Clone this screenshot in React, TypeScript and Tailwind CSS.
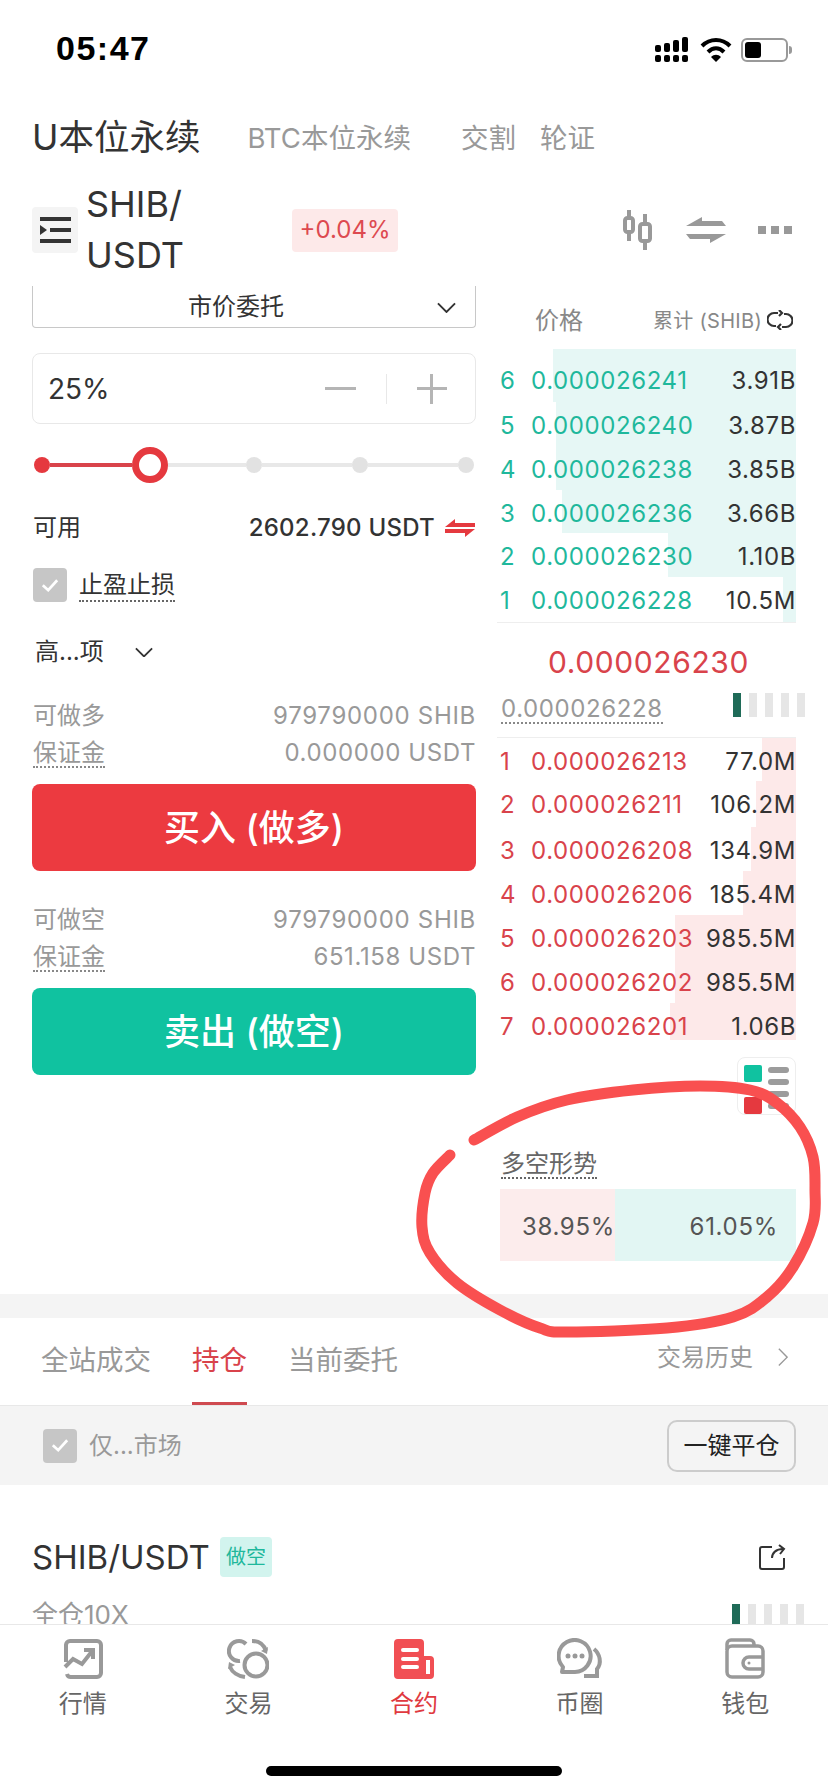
import type { ReactNode } from "react"

const bids = [
  { n: 6, price: "0.000026241", vol: "3.91B", bar: 243, h: "h-[53px]", first: true },
  { n: 5, price: "0.000026240", vol: "3.87B", bar: 240, h: "h-[44px]" },
  { n: 4, price: "0.000026238", vol: "3.85B", bar: 240, h: "h-[44px]" },
  { n: 3, price: "0.000026236", vol: "3.66B", bar: 234, h: "h-[43px]" },
  { n: 2, price: "0.000026230", vol: "1.10B", bar: 128, h: "h-[44px]" },
  { n: 1, price: "0.000026228", vol: "10.5M", bar: 13, h: "h-[45px]" },
]

const asks = [
  { n: 1, price: "0.000026213", vol: "77.0M", bar: 34, h: "h-[43px]" },
  { n: 2, price: "0.000026211", vol: "106.2M", bar: 40, h: "h-[46px]" },
  { n: 3, price: "0.000026208", vol: "134.9M", bar: 45, h: "h-[44px]" },
  { n: 4, price: "0.000026206", vol: "185.4M", bar: 53, h: "h-[44px]" },
  { n: 5, price: "0.000026203", vol: "985.5M", bar: 121, h: "h-[44px]" },
  { n: 6, price: "0.000026202", vol: "985.5M", bar: 121, h: "h-[44px]" },
  { n: 7, price: "0.000026201", vol: "1.06B", bar: 126, h: "h-[37px]" },
]

// hand drawn circle, roughly traced off the reference
const circlePoints = [
  [474, 1140], [517, 1117], [567, 1100], [633, 1090], [700, 1086], [750, 1090], [777, 1103], [800, 1127],
  [813, 1157], [815, 1190], [813, 1223], [793, 1267], [767, 1297], [733, 1317], [667, 1328], [567, 1332],
  [540, 1328], [500, 1310], [457, 1283], [430, 1253], [422, 1227], [425, 1193], [433, 1173], [450, 1155],
]

function smoothPath(pts: number[][]) {
  let d = `M${pts[0][0]} ${pts[0][1]}`
  for (let i = 0; i < pts.length - 1; i++) {
    const p0 = pts[Math.max(i - 1, 0)]
    const p1 = pts[i]
    const p2 = pts[i + 1]
    const p3 = pts[Math.min(i + 2, pts.length - 1)]
    d += ` C${p1[0] + (p2[0] - p0[0]) / 6} ${p1[1] + (p2[1] - p0[1]) / 6} ${p2[0] - (p3[0] - p1[0]) / 6} ${p2[1] - (p3[1] - p1[1]) / 6} ${p2[0]} ${p2[1]}`
  }
  return d
}

function Chevron({ className }: { className: string }) {
  return (
    <svg viewBox="0 0 20 12" fill="none" stroke="#333" strokeWidth="2" className={className}>
      <path d="M1 1.5 10 10.5 19 1.5" />
    </svg>
  )
}

function Check() {
  return (
    <span className="flex size-[34px] shrink-0 items-center justify-center rounded-[4px] bg-[#c6c6c6]">
      <svg viewBox="0 0 20 16" fill="none" stroke="#fff" strokeWidth="3" className="w-[18px]">
        <path d="M2 8 8 13.5 18 2.5" />
      </svg>
    </span>
  )
}

function Dotted({ children, className }: { children: ReactNode; className: string }) {
  return <span className={`border-b-2 border-dotted ${className}`}>{children}</span>
}

function LevelBars() {
  return (
    <div className="flex h-full gap-2">
      <span className="h-full w-2 bg-[#1f6b58]" />
      <span className="h-full w-2 bg-[#e6e6e6]" />
      <span className="h-full w-2 bg-[#e6e6e6]" />
      <span className="h-full w-2 bg-[#e6e6e6]" />
      <span className="h-full w-2 bg-[#e6e6e6]" />
    </div>
  )
}

function Stats({ top, label, amount, margin }: { top: string; label: string; amount: string; margin: string }) {
  return (
    <div className={`${top} text-[24px] leading-[36px] text-[#999]`}>
      <div className="flex justify-between pl-px">
        <span>{label}</span>
        <span className="tracking-[0.7px]">{amount}</span>
      </div>
      <div className="mt-px flex justify-between pl-px">
        <Dotted className="h-[33px] border-[#888] leading-[36px]">保证金</Dotted>
        <span className="tracking-[0.6px]">{margin}</span>
      </div>
    </div>
  )
}

function BookRow({
  n, price, vol, bar, h, first, tone,
}: { n: number; price: string; vol: string; bar: number; h: string; first?: boolean; tone: "bid" | "ask" }) {
  return (
    <div className={`relative flex items-start ${h}`}>
      <span
        className={`absolute inset-y-0 right-0 ${tone === "bid" ? "bg-[#e6f7f5]" : "bg-[#fde9e9]"}`}
        style={{ width: bar }}
      />
      <div
        className={`relative flex w-full text-[24px] leading-[44px] tracking-[0.6px] ${first ? "mt-[10px]" : "mt-[2px]"}`}
      >
        <span className={`w-[34px] pl-[3px] ${tone === "bid" ? "text-[#1fb89c]" : "text-[#d9434b]"}`}>{n}</span>
        <span className={tone === "bid" ? "text-[#1fb89c]" : "text-[#d9434b]"}>{price}</span>
        <span className="ml-auto text-[#333]">{vol}</span>
      </div>
    </div>
  )
}

function NavIcon({ name }: { name: string }) {
  if (name === "market") {
    return (
      <svg viewBox="0 0 40 42" fill="none" stroke="#999" strokeWidth="4" className="h-[42px] w-[40px]">
        <path d="M3 24V7a4 4 0 0 1 4-4h27a4 4 0 0 1 4 4v28a4 4 0 0 1-4 4H8a4 4 0 0 1-4-3" />
        <path d="M2 29l8-8 9 5 11-14" />
        <path d="M21 12h9v9" />
      </svg>
    )
  }
  if (name === "trade") {
    return (
      <svg viewBox="0 0 42 42" fill="none" stroke="#999" strokeWidth="4" className="h-[42px] w-[42px]">
        <circle cx="29" cy="27" r="11.5" />
        <path d="M19 6A10 10 0 1 0 13 23" />
        <path d="M25 3C32 3 37 7 39 13" />
        <path d="M3 29C5 34 11 38 18 39" />
        <path d="M34 13l6 3 1-7z" fill="#999" stroke="none" />
        <path d="M2 24l6 3-7 4z" fill="#999" stroke="none" />
      </svg>
    )
  }
  if (name === "contract") {
    return (
      <svg viewBox="0 0 40 40" className="h-[40px] w-[40px]">
        <path d="M4 0h22a4 4 0 0 1 4 4v13h6a4 4 0 0 1 4 4v15a4 4 0 0 1-4 4H4a4 4 0 0 1-4-4V4a4 4 0 0 1 4-4z" fill="#f14f54" />
        <path d="M9 11h14M9 20h14M9 28h14" stroke="#fff" strokeWidth="4" strokeLinecap="round" />
        <path d="M34 21v14" stroke="#fff" strokeWidth="4" />
      </svg>
    )
  }
  if (name === "circle") {
    return (
      <svg viewBox="0 0 46 42" fill="none" stroke="#999" strokeWidth="4" className="h-[42px] w-[46px]">
        <path d="M6 29A16 16 0 1 1 18 34H5z" strokeLinejoin="round" />
        <path d="M37 11C43 16 45 25 40 31L40 38H27" />
        <circle cx="11" cy="18" r="2.5" fill="#999" stroke="none" />
        <circle cx="18" cy="18" r="2.5" fill="#999" stroke="none" />
        <circle cx="25" cy="18" r="2.5" fill="#999" stroke="none" />
      </svg>
    )
  }
  return (
    <svg viewBox="0 0 42 42" fill="none" stroke="#999" strokeWidth="3.5" className="h-[42px] w-[42px]">
      <path d="M3 12V6a4 4 0 0 1 4-4h19a4 4 0 0 1 4 4v3" />
      <rect x="3" y="8" width="36" height="31" rx="5" />
      <path d="M39 19H25a6 6 0 0 0 0 12h14" />
      <circle cx="25" cy="25" r="1.5" fill="#999" stroke="none" />
    </svg>
  )
}

const navItems = [
  { icon: "market", label: "行情", tone: "text-[#666]" },
  { icon: "trade", label: "交易", tone: "text-[#666]" },
  { icon: "contract", label: "合约", tone: "text-[#e0393f]" },
  { icon: "circle", label: "币圈", tone: "text-[#666]" },
  { icon: "wallet", label: "钱包", tone: "text-[#666]" },
]

export default function App() {
  return (
    <div className="relative h-[1792px] w-[828px] overflow-hidden bg-white font-['Inter','Noto_Sans_CJK_SC',sans-serif] text-[#333]">
      {/* status bar */}
      <div className="flex h-[113px] items-start justify-between pl-[56px] pr-[36px] pt-[30px]">
        <span className="font-['Liberation_Sans',sans-serif] text-[34px] font-bold leading-[36px] tracking-[1.5px] text-black">05:47</span>
        <div className="mt-[7px] flex items-center">
          <svg viewBox="0 0 33 26" className="h-[26px] w-[33px]" fill="#000">
            <rect x="0" y="8" width="6" height="7" rx="2" />
            <rect x="9" y="6" width="6" height="9" rx="2" />
            <rect x="18" y="3" width="6" height="12" rx="2" />
            <rect x="27" y="0" width="6" height="15" rx="2" />
            <rect x="0" y="18" width="6" height="7" rx="2" />
            <rect x="9" y="18" width="6" height="7" rx="2" />
            <rect x="18" y="18" width="6" height="7" rx="2" />
            <rect x="27" y="18" width="6" height="7" rx="2" />
          </svg>
          <svg viewBox="0 0 32 26" className="ml-[12px] h-[26px] w-[32px]" fill="none" stroke="#000" strokeWidth="4">
            <path d="M2 9c8-8 20-8 28 0" />
            <path d="M8 15c5-5 11-5 16 0" />
            <path d="M16 25l-5-5c3-3 7-3 10 0z" fill="#000" stroke="none" />
          </svg>
          <div className="ml-[9px] flex h-[24px] w-[47px] items-center rounded-[6px] border-2 border-[#999] p-[2px]">
            <span className="h-full w-[16px] rounded-[3px] bg-black" />
          </div>
          <span className="ml-px h-[8px] w-[3px] rounded-r-full bg-[#999]" />
        </div>
      </div>

      {/* product tabs */}
      <div className="flex h-[50px] items-center pl-[32px] text-[27.5px] leading-[50px] text-[#999]">
        <span className="text-[35.5px] text-[#333]">U本位永续</span>
        <span className="ml-[47px]">BTC本位永续</span>
        <span className="ml-[50px]">交割</span>
        <span className="ml-[24px]">轮证</span>
      </div>

      {/* pair row */}
      <div className="mt-[17px] flex h-[100px] items-center pl-[32px] pr-[36px]">
        <div className="flex h-[46px] w-[46px] items-center justify-center rounded-[4px] bg-[#f4f4f4]">
          <svg viewBox="0 0 32 28" className="w-[32px]" fill="#333">
            <rect x="1" y="1" width="31" height="4" />
            <rect x="11" y="12" width="21" height="4" />
            <rect x="1" y="23" width="31" height="4" />
            <path d="M1 9l7 5-7 5z" />
          </svg>
        </div>
        <div className="ml-[8px] w-[130px] text-[36px] leading-[51px]">SHIB/ USDT</div>
        <span className="ml-[76px] flex h-[43px] w-[106px] items-center justify-center rounded-[4px] bg-[#fde9e9] text-[24px] text-[#dd4a50]">+0.04%</span>
        <svg viewBox="0 0 32 42" fill="none" stroke="#999" strokeWidth="4" className="ml-auto h-[42px] w-[32px]">
          <rect x="3" y="9" width="8" height="14" rx="2.5" />
          <path d="M7 1v8M7 23v9" />
          <rect x="18" y="15" width="10" height="17" rx="2.5" />
          <path d="M23 5v10M23 32v9" />
        </svg>
        <svg viewBox="0 0 40 26" fill="#999" className="ml-[32px] h-[26px] w-[40px]">
          <path d="M0 9 16 0v4h20l4 5z" />
          <path d="M40 17 24 26v-4H4l-4-5z" />
        </svg>
        <div className="ml-[32px] flex gap-[5px]">
          <span className="size-[8px] bg-[#999]" />
          <span className="size-[8px] bg-[#999]" />
          <span className="size-[8px] bg-[#999]" />
        </div>
      </div>

      <div className="mt-[6px] flex h-[1008px] pl-[32px] pr-[32px]">
        {/* order form */}
        <div className="w-[444px] shrink-0">
          <div className="relative flex h-[42px] items-center justify-center rounded-b-[4px] border-x border-b border-[#c8c8c8] pr-[36px] text-[24px]">
            市价委托
            <Chevron className="absolute right-[19px] top-[16px] w-[19px]" />
          </div>

          <div className="mt-[25px] flex h-[71px] items-center rounded-[8px] border border-[#e8e8e8] pl-[15px]">
            <span className="text-[28px]">25%</span>
            <span className="ml-[215px] h-[3px] w-[31px] bg-[#b5b5b5]" />
            <span className="ml-[30px] h-[30px] w-px bg-[#e8e8e8]" />
            <span className="relative ml-[30px] size-[30px]">
              <span className="absolute left-0 top-[13px] h-[3px] w-[30px] bg-[#b5b5b5]" />
              <span className="absolute left-[13px] top-0 h-[30px] w-[3px] bg-[#b5b5b5]" />
            </span>
          </div>

          <div className="ml-[2px] mt-[23px] flex h-[36px] items-center">
            <span className="size-[16px] rounded-full bg-[#e5393f]" />
            <span className="h-[4px] w-[82px] bg-[#d9434b]" />
            <span className="size-[36px] rounded-full border-[7px] border-[#e5393f] bg-white" />
            <span className="h-[4px] w-[78px] bg-[#e8e8e8]" />
            <span className="size-[16px] rounded-full bg-[#e2e2e2]" />
            <span className="h-[4px] w-[90px] bg-[#e8e8e8]" />
            <span className="size-[16px] rounded-full bg-[#e2e2e2]" />
            <span className="h-[4px] w-[90px] bg-[#e8e8e8]" />
            <span className="size-[16px] rounded-full bg-[#e2e2e2]" />
          </div>

          <div className="mt-[29px] flex h-[32px] items-center pl-px text-[24px]">
            <span>可用</span>
            <span className="ml-auto font-medium tracking-[0.25px]">2602.790 USDT</span>
            <svg viewBox="0 0 30 20" fill="#e5393f" className="ml-[10px] mr-px w-[30px]">
              <path d="M0 9 10 1v4h20v4z" />
              <path d="M30 11 20 19v-4H0v-4z" />
            </svg>
          </div>

          <div className="mt-[24px] flex h-[34px] items-center pl-px text-[24px]">
            <Check />
            <Dotted className="ml-[12px] h-[34px] border-[#666] leading-[34px]">止盈止损</Dotted>
          </div>

          <div className="mt-[34px] flex h-[32px] items-center pl-[3px] text-[24px]">
            <span>高...项</span>
            <Chevron className="ml-[31px] w-[18px]" />
          </div>

          <Stats top="mt-[30px]" label="可做多" amount="979790000 SHIB" margin="0.000000 USDT" />
          <button type="button" className="mt-[13px] flex h-[87px] w-full items-center justify-center rounded-[8px] bg-[#ec3a40] text-[36px] font-medium text-white">
            买入 (做多)
          </button>

          <Stats top="mt-[31px]" label="可做空" amount="979790000 SHIB" margin="651.158 USDT" />
          <button type="button" className="mt-[13px] flex h-[87px] w-full items-center justify-center rounded-[8px] bg-[#10c2a0] text-[36px] font-medium text-white">
            卖出 (做空)
          </button>
        </div>

        {/* order book */}
        <div className="ml-[21px] w-[299px] shrink-0">
          <div className="flex h-[63px] items-start pt-[20px] text-[#888]">
            <span className="ml-[38px] text-[24px] leading-[30px]">价格</span>
            <span className="ml-auto text-[20px] leading-[30px] tracking-[0.3px]">累计 (SHIB)</span>
            <svg viewBox="0 0 26 20" fill="none" stroke="#333" strokeWidth="2.2" className="ml-[5px] mr-[3px] mt-[4px] w-[26px]">
              <path d="M11 3H7a6 6 0 0 0 0 13h2" />
              <path d="M15 17h4a6 6 0 0 0 0-13h-2" />
              <path d="M12 0l3 3-3 3M14 14l-3 3 3 3" />
            </svg>
          </div>

          <div className="border-b border-[#eee]">
            {bids.map((row) => (
              <BookRow key={row.n} {...row} tone="bid" />
            ))}
          </div>

          <div className="h-[115px] border-b border-[#eee]">
            <div className="pl-[51px] pt-[19px] text-[30px] leading-[40px] tracking-[0.6px] text-[#d9434b]">0.000026230</div>
            <div className="mt-[12px] flex h-[30px] items-start pl-[4px]">
              <Dotted className="h-[30px] border-[#888] text-[24px] leading-[30px] tracking-[0.6px] text-[#999]">0.000026228</Dotted>
              <div className="ml-[70px] mt-[-1px] h-[24px]">
                <LevelBars />
              </div>
            </div>
          </div>

          <div>
            {asks.map((row) => (
              <BookRow key={row.n} {...row} tone="ask" />
            ))}
          </div>

          <div className="ml-auto mt-[17px] flex h-[58px] w-[59px] gap-[6px] rounded-[8px] border border-[#eee] pl-[6px] pt-[7px]">
            <div className="flex flex-col gap-[15px]">
              <span className="size-[18px] rounded-[2px] bg-[#10c2a0]" />
              <span className="size-[18px] rounded-[2px] bg-[#e5393f]" />
            </div>
            <div className="flex flex-col gap-[6px] pt-[2px]">
              <span className="h-[6px] w-[21px] rounded-full bg-[#9c9c9c]" />
              <span className="h-[6px] w-[21px] rounded-full bg-[#9c9c9c]" />
              <span className="h-[6px] w-[21px] rounded-full bg-[#9c9c9c]" />
              <span className="h-[6px] w-[21px] rounded-full bg-[#9c9c9c]" />
            </div>
          </div>

          <div className="mt-[33px] flex h-[31px] pl-[4px] text-[24px] text-[#666]">
            <Dotted className="h-[31px] border-[#666] leading-[31px]">多空形势</Dotted>
          </div>
          <div className="ml-[3px] mt-[10px] flex h-[72px] text-[24px] tracking-[0.7px] text-[#555]">
            <div className="flex h-full w-[115px] items-center justify-end bg-[#fcecec] pt-[3px]">38.95%</div>
            <div className="flex h-full flex-1 items-center justify-end bg-[#e2f6f3] pr-[18px] pt-[3px]">61.05%</div>
          </div>
        </div>
      </div>

      <div className="h-[24px] bg-[#f4f4f4]" />

      {/* positions tabs */}
      <div className="flex h-[87px] items-start pl-[41px] pr-[40px] text-[27.5px] text-[#999]">
        <span className="mt-[24px] leading-[36px]">全站成交</span>
        <span className="ml-[41px] flex h-full flex-col justify-between pt-[24px] leading-[36px] text-[#d9434b]">
          持仓
          <span className="h-[3px] bg-[#cf4a50]" />
        </span>
        <span className="ml-[41px] mt-[24px] leading-[36px]">当前委托</span>
        <span className="ml-auto mt-[24px] text-[24px] leading-[32px]">交易历史</span>
        <svg viewBox="0 0 12 22" fill="none" stroke="#999" strokeWidth="1.6" className="ml-[25px] mt-[30px] w-[10px]">
          <path d="M1 1l10 10L1 21" />
        </svg>
      </div>

      <div className="flex h-[80px] items-center border-t border-[#e8e8e8] bg-[#f4f4f4] pl-[43px] pr-[32px]">
        <Check />
        <span className="ml-[12px] text-[24px] text-[#999]">仅...市场</span>
        <button type="button" className="ml-auto flex h-[52px] w-[129px] items-center justify-center rounded-[10px] border-2 border-[#ccc] text-[24px] text-[#222]">
          一键平仓
        </button>
      </div>

      {/* open position, clipped by the tab bar */}
      <div className="h-[139px] overflow-hidden pl-[32px] pr-[24px]">
        <div className="mt-[52px] flex h-[40px] items-center">
          <span className="text-[33px] leading-[40px]">SHIB/USDT</span>
          <span className="ml-[10px] flex h-[40px] w-[52px] items-center justify-center rounded-[4px] bg-[#d2f4ee] text-[20px] text-[#1fb89c]">做空</span>
          <svg viewBox="0 0 28 26" fill="none" stroke="#333" strokeWidth="2" className="ml-auto mr-[18px] w-[28px]">
            <path d="M14 3H4a2 2 0 0 0-2 2v18a2 2 0 0 0 2 2h20a2 2 0 0 0 2-2V14" />
            <path d="M14 14c0-5 4-9 11-9M21 1l5 4-4 5" />
          </svg>
        </div>
        <div className="mt-[20px] flex h-[36px] items-start justify-between">
          <span className="text-[26px] leading-[36px] text-[#999]">全仓10X</span>
          <div className="mt-[7px] h-[24px]">
            <LevelBars />
          </div>
        </div>
      </div>

      {/* tab bar */}
      <nav className="grid h-[142px] grid-cols-5 border-t border-[#e8e8e8] pt-[12px]">
        {navItems.map((item) => (
          <div key={item.label} className="flex flex-col items-center">
            <div className="flex h-[44px] items-center">
              <NavIcon name={item.icon} />
            </div>
            <span className={`mt-[5px] text-[24px] leading-[36px] ${item.tone}`}>{item.label}</span>
          </div>
        ))}
      </nav>
      <div className="mx-auto h-[10px] w-[296px] rounded-full bg-black" />

      {/* marker scribble on top of the screenshot */}
      <svg viewBox="0 0 828 1792" className="pointer-events-none absolute inset-0 h-[1792px] w-[828px]" fill="none">
        <path d={smoothPath(circlePoints)} stroke="#f95050" strokeWidth="11" strokeLinecap="round" strokeLinejoin="round" />
      </svg>
    </div>
  )
}
